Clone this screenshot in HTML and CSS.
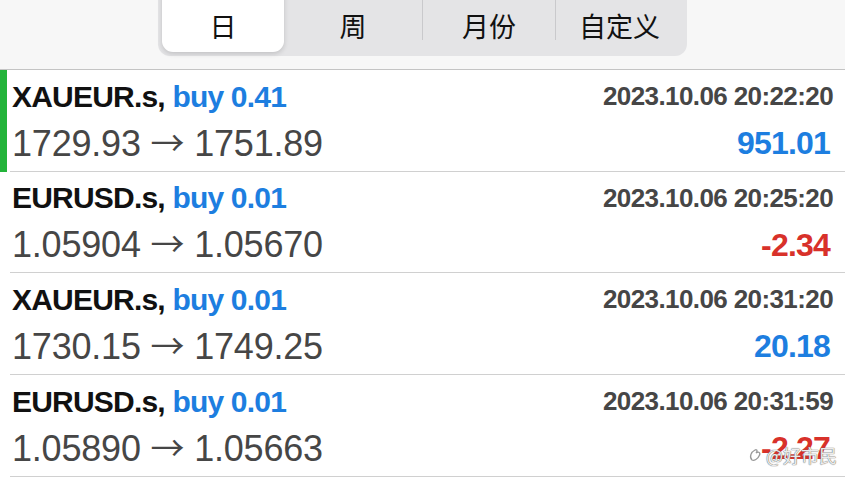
FILE: index.html
```html
<!DOCTYPE html>
<html lang="zh-CN">
<head>
    <meta charset="UTF-8">
    <title>历史</title>
    <link rel="stylesheet" href="styles.css">
</head>
<body>

<!--顶部切换栏-->
<div class="header">
    <div class="segment">
        <a class="seg-item active" href="javascript:;">日</a>
        <a class="seg-item" href="javascript:;">周</a>
        <a class="seg-item line" href="javascript:;">月份</a>
        <a class="seg-item line" href="javascript:;">自定义</a>
    </div>
</div>

<!--交易列表-->
<ul class="trades">
    <li class="trade selected">
        <div class="trade-body">
            <div class="row">
                <span class="symbol">XAUEUR.s, <span class="buy">buy 0.41</span></span>
                <span class="time">2023.10.06 20:22:20</span>
            </div>
            <div class="row">
                <span class="price">1729.93 <span class="arrow">→</span> 1751.89</span>
                <span class="profit">951.01</span>
            </div>
        </div>
    </li>
    <li class="trade">
        <div class="trade-body">
            <div class="row">
                <span class="symbol">EURUSD.s, <span class="buy">buy 0.01</span></span>
                <span class="time">2023.10.06 20:25:20</span>
            </div>
            <div class="row">
                <span class="price">1.05904 <span class="arrow">→</span> 1.05670</span>
                <span class="profit loss">-2.34</span>
            </div>
        </div>
    </li>
    <li class="trade">
        <div class="trade-body">
            <div class="row">
                <span class="symbol">XAUEUR.s, <span class="buy">buy 0.01</span></span>
                <span class="time">2023.10.06 20:31:20</span>
            </div>
            <div class="row">
                <span class="price">1730.15 <span class="arrow">→</span> 1749.25</span>
                <span class="profit">20.18</span>
            </div>
        </div>
    </li>
    <li class="trade">
        <div class="trade-body">
            <div class="row">
                <span class="symbol">EURUSD.s, <span class="buy">buy 0.01</span></span>
                <span class="time">2023.10.06 20:31:59</span>
            </div>
            <div class="row">
                <span class="price">1.05890 <span class="arrow">→</span> 1.05663</span>
                <span class="profit loss">-2.27</span>
            </div>
        </div>
    </li>
    <li class="trade">
        <div class="trade-body">
            <div class="row">
                <span class="symbol">Balance</span>
            </div>
        </div>
    </li>
</ul>

<!--水印-->
<div class="mark">
    <svg width="16" height="16" viewBox="0 0 16 16">
        <path d="M4 13 C1 10 3 5 7 3 C9 2 10 4 8 6 M8 6 C11 4 13 6 11 9 C10 12 6 14 4 13" fill="none" stroke="#999" stroke-width="1.3"/>
    </svg>
    <span>@好市民</span>
</div>

</body>
</html>
```

FILE: styles.css
```css
* {
    margin: 0;
    padding: 0;
}

body {
    width: 845px;
    height: 490px;
    overflow: hidden;
    background-color: #fff;
    font-family: "Liberation Sans", Arial, "Noto Sans CJK SC", sans-serif;
    position: relative;
}

/*顶部*/
.header {
    height: 69px;
    background-color: #f7f7f7;
    border-bottom: 1px solid #c4c4c4;
    display: flex;
    justify-content: center;
    overflow: hidden;
}

.segment {
    width: 521px;
    height: 62px;
    margin-top: -10px;
    padding: 0 4px 4px;
    background-color: #e4e4e6;
    border-radius: 0 0 12px 12px;
    display: flex;
    align-items: flex-end;
}

.seg-item {
    flex: 0 0 133px;
    height: 62px;
    display: flex;
    align-items: center;
    justify-content: center;
    padding: 8px 0 0;
    box-sizing: border-box;
    color: #111;
    text-decoration: none;
    font-family: "Noto Sans CJK SC", sans-serif;
    font-size: 27px;
}

/*选中的按钮*/
.seg-item.active {
    flex-basis: 122px;
    background-color: #fff;
    border-radius: 0 0 11px 11px;
    box-shadow: 0 2px 5px rgba(0, 0, 0, .15);
}

.seg-item:nth-child(2) {
    flex-basis: 138px;
}

.seg-item:nth-child(4) {
    flex-basis: 128px;
}

/*分隔线*/
.seg-item.line {
    border-left: 1px solid #c9c9cc;
    border-image: linear-gradient(to bottom, #c9c9cc 80%, transparent 80%) 1;
}

/*列表*/
.trades {
    list-style: none;
}

.trade {
    border-left: 7px solid transparent;
    padding-left: 3px;
}

.trade.selected {
    border-left-color: #23b43a;
}

.trade-body {
    height: 101.7px;
    box-sizing: border-box;
    border-bottom: 1px solid #d0d0d0;
    padding: 3px 12px 0 2px;
}

.row {
    display: flex;
    justify-content: space-between;
    align-items: center;
    height: 47px;
}

.symbol {
    font-weight: bold;
    font-size: 30px;
    color: #111;
    letter-spacing: -0.8px;
}

.buy {
    color: #1d7ee0;
}

.time {
    font-weight: bold;
    font-size: 26px;
    color: #464646;
    letter-spacing: -0.6px;
}

.price {
    font-size: 36px;
    color: #464646;
    letter-spacing: -0.2px;
}

/*箭头*/
.arrow {
    font-family: "Noto Sans CJK SC", sans-serif;
    font-size: 34px;
    line-height: 1;
}

.profit {
    font-weight: bold;
    font-size: 32px;
    color: #1d7ee0;
    margin-right: 3px;
    letter-spacing: -0.8px;
}

.profit.loss {
    color: #d8312a;
}

/*水印*/
.mark {
    position: absolute;
    left: 748px;
    top: 442px;
    display: flex;
    align-items: center;
    gap: 2px;
    font-family: "Noto Sans CJK SC", sans-serif;
    font-size: 18px;
    color: rgba(255, 255, 255, .9);
    text-shadow: 0 0 1px #666, 0 0 1px #666;
}
```
